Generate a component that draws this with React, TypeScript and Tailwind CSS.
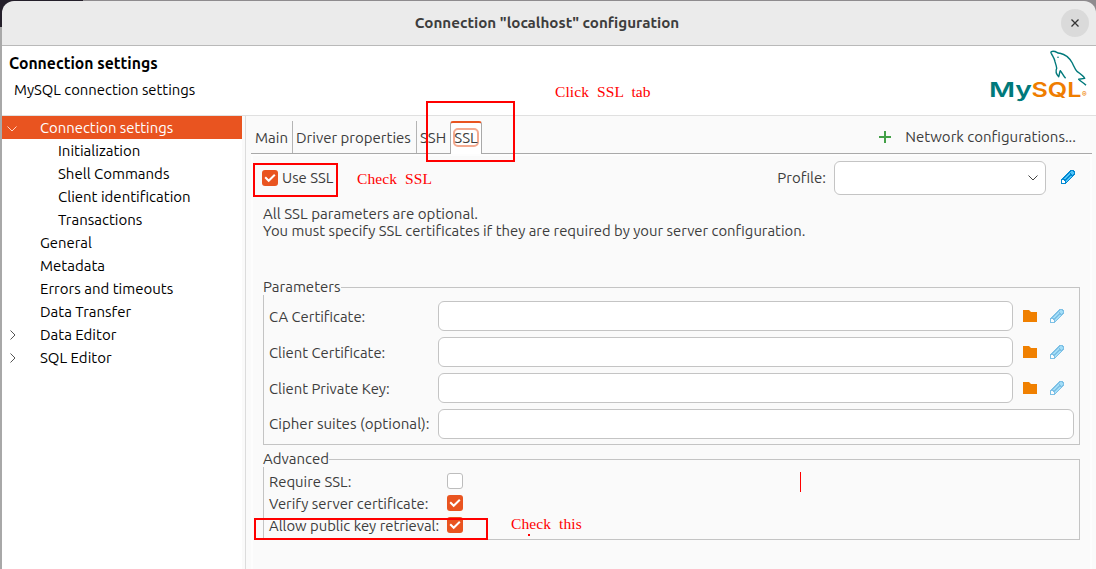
import React from "react";

function Check({ on }: { on?: boolean }) {
  return on ? (
    <span className="block size-4 shrink-0 rounded-[3px] bg-[#e95420]">
      <svg viewBox="0 0 16 16" className="size-4" fill="none" stroke="white" strokeWidth="2">
        <path d="M3.2 7.3 6.7 10.8 12.8 4.7" />
      </svg>
    </span>
  ) : (
    <span className="block size-4 shrink-0 rounded-[3px] border border-[#bdbdbd] bg-white" />
  );
}

function Pencil({ faded }: { faded?: boolean }) {
  return (
    <svg viewBox="0 0 14 14" className={faded ? "size-3.5 shrink-0 opacity-50" : "size-3.5 shrink-0"} shapeRendering="crispEdges">
      <path d="M0 14V9h1V8h1V7h1V6h1V5h1V4h1V3h1V2h1V1h1V0h4v1h1v4h-1v1h-1v1h-1v1h-1v1H9v1H8v1H7v1H6v1H5v1z" fill="#0288d1" />
      <path d="M10 1h2v1h1v2h-1v1h-1V4h-1V3H9V2h1zM3 8h1V7h1V6h1V5h1V4h1V3h1v2H8v1H7v1H6v1H5v1H3zM5 10h1V9h1V8h1V7h1V6h2v1h-1v1H9v1H8v1H7v1H6v1H5z" fill="#4fc3f7" />
      <path d="M1 10h2v1h1v2H1z" fill="#ffffff" />
    </svg>
  );
}

function Folder() {
  return (
    <svg viewBox="0 0 14 12" className="h-3 w-3.5 shrink-0">
      <path d="M0 0h6l2 2h6v10H0z" fill="#f08000" />
    </svg>
  );
}

function Logo() {
  return (
    <svg viewBox="0 0 100 54" className="h-[54px] w-[100px]">
      <g fill="none" stroke="#00797b" strokeWidth="1.4" strokeLinejoin="round">
        <path d="M61.300 3.300C60 1.500 62 1 65 1.500C67 2.500 68 3.500 70 3.300C75 4.300 79.500 8 82.300 13C84 16.500 85 19.500 87.300 21.700C90 23.500 93 25.500 94.700 28.400L88.700 29.300C90.500 31.500 93.500 32.500 96 35.300" />
        <path d="M61.300 3.300C62 5.500 64.500 8 65 11.700C65.500 14 66.500 15.500 66.700 18.300C65.500 21 66 24 68.700 26.700C69.500 25 69.300 22.500 70.300 20.700C72 22.500 73.300 26 75.600 28.300" />
      </g>
      <circle cx="68" cy="7.300" r="0.8" fill="#00797b" />
      <g fontFamily="Inter, sans-serif" fontSize="20.500" fontWeight="600">
        <text x="-1" y="46.500" fill="#00797b" textLength="43" lengthAdjust="spacingAndGlyphs">My</text>
        <text x="41.500" y="46.500" fill="#ef7d00" textLength="50" lengthAdjust="spacingAndGlyphs">SQL</text>
        <text x="92" y="47" fill="#ef7d00" fontSize="7">®</text>
      </g>
    </svg>
  );
}

const tree = [
  { label: "Connection settings", cls: "pl-[38px]", arrow: "down" },
  { label: "Initialization", cls: "pl-14 text-[15px]" },
  { label: "Shell Commands", cls: "pl-14 text-[15px]" },
  { label: "Client identification", cls: "pl-14 text-[15px]" },
  { label: "Transactions", cls: "pl-14 text-[15px]" },
  { label: "General", cls: "pl-[38px]" },
  { label: "Metadata", cls: "pl-[38px] text-[15px]" },
  { label: "Errors and timeouts", cls: "pl-[38px] text-[15px]" },
  { label: "Data Transfer", cls: "pl-[38px] text-[15px]" },
  { label: "Data Editor", cls: "pl-[38px] text-[15px]", arrow: "right" },
  { label: "SQL Editor", cls: "pl-[38px] text-[15px]", arrow: "right" },
];

function Sidebar() {
  return (
    <div className="w-[240px] shrink-0 bg-white text-black">
      {tree.map((t) => (
        <div
          key={t.label}
          className={`relative flex h-[23px] items-center ${t.cls} ${t.arrow === "down" ? "bg-[#e95420] text-white" : ""}`}
        >
          {t.arrow === "down" && (
            <svg viewBox="0 0 10 6" className="absolute left-[5px] top-[10px] h-1.5 w-2.5" fill="none" stroke="#ffd5c6">
              <path d="M.5.5 5 5 9.500.5" />
            </svg>
          )}
          {t.arrow === "right" && (
            <svg viewBox="0 0 6 10" className="absolute left-2 top-[7px] h-2.5 w-1.5" fill="none" stroke="#555">
              <path d="M.5.5 5 5 .5 9.500" />
            </svg>
          )}
          {t.label}
        </div>
      ))}
    </div>
  );
}

function Tabs() {
  return (
    <div className="flex h-[38px] shrink-0 items-end border-b border-[#a9a9a9] text-[15px]">
      <div className="flex h-8 w-[42px] items-center border-r border-[#b4b4b4] pl-1 pt-0.5">Main</div>
      <div className="flex h-8 w-[124px] items-center border-r border-[#b4b4b4] pl-[3px] pt-0.5">Driver properties</div>
      <div className="flex h-8 w-[33px] items-center pl-[3px] pt-0.5">SSH</div>
      <div className="-mb-px flex h-[33px] w-8 items-center justify-center rounded-t-[3px] border-x border-t-2 border-x-[#a9a9a9] border-t-[#e95420] bg-white pb-0.5">
        <span className="flex h-[19px] w-[26px] items-center justify-center rounded-[5px] border-2 border-[#f4aa90]">SSL</span>
      </div>
      <div className="ml-auto flex h-8 items-center pr-4">
        <svg viewBox="0 0 12 12" className="mr-[14px] size-3" stroke="#43a047" strokeWidth="2">
          <path d="M6 0v12M0 6h12" />
        </svg>
        <span>Network configurations...</span>
      </div>
    </div>
  );
}

const files = ["CA Certificate:", "Client Certificate:", "Client Private Key:"];

const options = [
  { label: "Require SSL:", on: false },
  { label: "Verify server certificate:", on: true },
  { label: "Allow public key retrieval:", on: true },
];

const input = "h-[30px] rounded-md border border-[#c4c4c4] bg-white";
const legend = "absolute -left-px -top-[10px] h-[17px] bg-[#fafafa] text-[15px] leading-[17px]";

function Page() {
  return (
    <div className="flex grow flex-col border-x-2 border-t-2 border-[#fdfdfd] pl-[10px] pr-[10px]">
      <div className="-ml-px mt-[5px] flex h-[34px] items-center">
        <span className="-mt-px"><Check on /></span>
        <span className="ml-1">Use SSL</span>
        <span className="ml-auto text-[15px]">Profile:</span>
        <span className="ml-2 flex h-[34px] w-[212px] items-center justify-end rounded-md border border-[#c4c4c4] bg-white pr-[7px]">
          <svg viewBox="0 0 10 6" className="h-1.5 w-2.5" fill="none" stroke="#444">
            <path d="M.5.5 5 5 9.500.5" />
          </svg>
        </span>
        <span className="-mt-0.5 ml-[15px] mr-[5px]"><Pencil /></span>
      </div>
      <div className="mt-[10px] leading-[17px]">
        <div className="text-[15.100px]">All SSL parameters are optional.</div>
        <div>You must specify SSL certificates if they are required by your server configuration.</div>
      </div>
      <div className="relative mt-[48px] flex h-[158px] w-[817px] shrink-0 flex-col gap-[6px] border border-[#c4c4c4] pl-[5px] pr-[5px] pt-[13px]">
        <span className={legend}>Parameters</span>
        {files.map((f) => (
          <div key={f} className="flex h-[30px] items-center">
            <span className="w-[169px] shrink-0 pt-0.5">{f}</span>
            <span className={`w-[575px] ${input}`} />
            <span className="ml-[10px] mr-[13px]"><Folder /></span>
            <Pencil faded />
          </div>
        ))}
        <div className="flex h-[30px] items-center">
          <span className="w-[169px] shrink-0 text-[15.100px]">Cipher suites (optional):</span>
          <span className={`grow ${input}`} />
        </div>
      </div>
      <div className="relative mt-[14px] flex h-[81px] w-[817px] shrink-0 flex-col border border-[#c4c4c4] pl-[5px] pt-[10px]">
        <span className={legend}>Advanced</span>
        {options.map((o) => (
          <div key={o.label} className="flex h-[22px] items-center">
            <span className="w-[178px] shrink-0 pt-0.5">{o.label}</span>
            <Check on={o.on} />
          </div>
        ))}
      </div>
    </div>
  );
}

function Notes() {
  return (
    <div className="pointer-events-none absolute inset-0 font-['Liberation_Serif',serif] text-[15.500px] leading-[18px] tracking-[0.1px] whitespace-pre text-[#ff0000]">
      <span className="absolute left-[555px] top-[83px]">Click  SSL  tab</span>
      <span className="absolute left-[357px] top-[170px]">Check  SSL</span>
      <span className="absolute left-[511px] top-[515px]">Check  this</span>
      <span className="absolute left-[426px] top-[101px] h-[61px] w-[89px] border-2 border-[#ff0000]" />
      <span className="absolute left-[253px] top-[163px] h-[34px] w-[85px] border-2 border-[#ff0000]" />
      <span className="absolute left-[254px] top-[518px] h-[22px] w-[234px] border-2 border-[#ff0000]" />
      <span className="absolute left-[800px] top-[472px] h-5 w-px bg-[#ff0000]" />
      <span className="absolute left-[528px] top-[534px] size-0.5 bg-[#ff0000]" />
    </div>
  );
}

export default function App() {
  return (
    <div className="relative flex h-[569px] w-[1096px] flex-col overflow-hidden bg-[linear-gradient(90deg,#241f2a_0_83px,#8e8b8e_83px)] pl-0.5 pt-px font-['Ubuntu','Noto_Sans',sans-serif] text-[14.850px] leading-[18px] text-[#3d3d3d]">
      <div className="absolute left-0 top-[27px] h-[542px] w-0.5 bg-[#a8a8a8]" />
      <div className="relative flex h-[45px] shrink-0 items-center justify-center rounded-t-xl border-b border-[#b9b9b9] bg-[#ebebeb]">
        <span className="-ml-1 text-[15.200px] font-bold">Connection "localhost" configuration</span>
        <span className="absolute right-[7px] top-2 flex size-7 items-center justify-center rounded-full bg-[#dadada]">
          <svg viewBox="0 0 8 8" className="size-2" stroke="#333" strokeWidth="1.3">
            <path d="M.5.5l7 7M7.500.5l-7 7" />
          </svg>
        </span>
      </div>
      <div className="flex h-[70px] shrink-0 justify-between border-b border-[#e0e0e0] bg-white text-black">
        <div>
          <div className="ml-[7px] mt-2 text-[15.750px] font-bold">Connection settings</div>
          <div className="ml-3 mt-[9px]">MySQL connection settings</div>
        </div>
        <div className="mr-[6px] mt-1"><Logo /></div>
      </div>
      <div className="flex grow bg-[#fafafa]">
        <Sidebar />
        <div className="ml-[3px] flex grow flex-col border-l border-[#dcdcdc] pl-[5px] pr-1">
          <Tabs />
          <Page />
        </div>
      </div>
      <Notes />
    </div>
  );
}
